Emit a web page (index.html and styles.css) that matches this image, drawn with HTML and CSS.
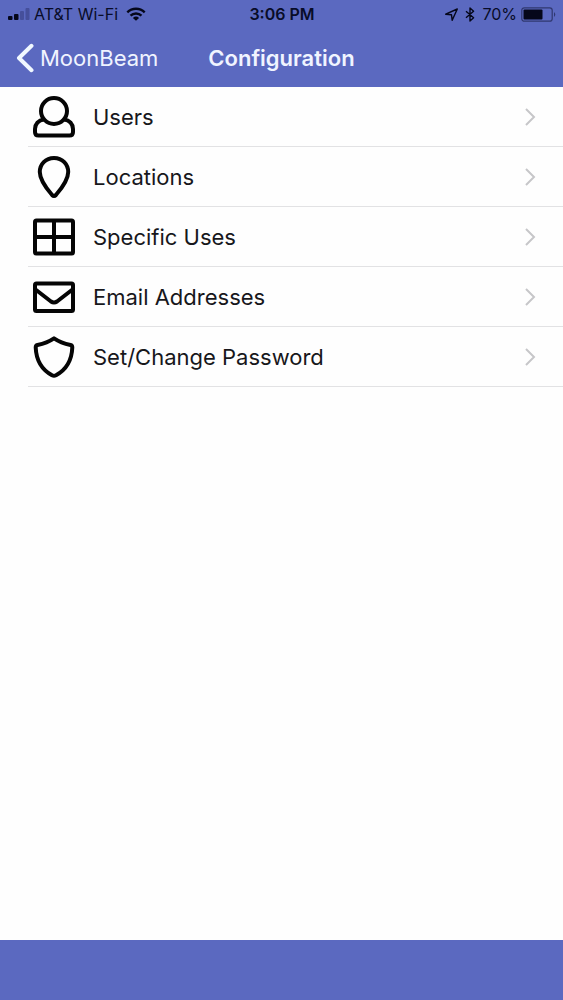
FILE: index.html
```html
<!DOCTYPE html>
<html lang="en">
<head>
<meta charset="utf-8">
<meta name="viewport" content="width=device-width, initial-scale=1">
<title>Configuration</title>
<link rel="stylesheet" href="styles.css">
</head>
<body>
<header class="header">
  <div class="status">
    <div class="status-left">
      <svg class="signal" width="22" height="12" viewBox="0 0 22 12" aria-hidden="true"><rect x="0" y="8" width="4.500" height="4" rx="1"/><rect x="6" y="6" width="4.500" height="6" rx="1"/><rect class="faint" x="12" y="3" width="4" height="9" rx="1"/><rect class="faint" x="17.500" y="0" width="4" height="12" rx="1"/></svg>
      <span class="carrier">AT&amp;T Wi-Fi</span>
      <svg class="wifi" width="20" height="14" viewBox="0 0 20 14" aria-hidden="true"><path d="M1.3 5.3a12.5 12.5 0 0 1 17.4 0M4.5 8.7a8 8 0 0 1 11 0"/><path class="dot" d="M6.9 10.9a4.6 4.6 0 0 1 6.2 0L10 13.8z"/></svg>
    </div>
    <span class="time">3:06 PM</span>
    <div class="status-right">
      <svg class="locate" width="13" height="13" viewBox="0 0 13 13" aria-hidden="true"><path d="M12.300 1 7.200 12.300 6.500 6.800 .7 6.200z"/></svg>
      <svg class="bluetooth" width="10" height="15" viewBox="0 0 10 15" aria-hidden="true"><path d="M1 4.2 8.6 10.8 5 14V1l3.6 3.2L1 10.8"/></svg>
      <span class="percent">70%</span>
      <svg class="battery" width="35" height="15" viewBox="0 0 35 15" aria-hidden="true"><rect class="case" x=".8" y=".8" width="30.4" height="13.4" rx="2.5"/><rect x="2.5" y="2.5" width="19" height="10" rx="1"/><path class="tip" d="M33 5q2.500 2.500 0 5z"/></svg>
    </div>
  </div>
  <nav class="navbar">
    <a class="back" href="#">
      <svg width="18" height="30" viewBox="0 0 18 30" aria-hidden="true"><path d="M15.5 2.8 3 15l12.5 12.2"/></svg>
      <span>MoonBeam</span>
    </a>
    <h1 class="title">Configuration</h1>
  </nav>
</header>
<main class="content">
  <ul class="menu">
    <li><a class="item" href="#">
      <svg class="icon" viewBox="0 0 42 42" aria-hidden="true"><circle cx="21" cy="15" r="13"/><path d="M10.8 23.5C5.500 24 2 28 2 33v3q0 3.500 3.500 3.500h31Q40 39.500 40 36v-3c0-5-3.500-9-8.800-9.500"/></svg>
      <span class="label">Users</span><svg class="chevron" viewBox="0 0 12 20" aria-hidden="true"><path d="m2 2 8 8-8 8"/></svg></a></li>
    <li><a class="item" href="#">
      <svg class="icon" viewBox="0 0 42 42" aria-hidden="true"><path d="M21 2C12.500 2 6.800 8.500 6.800 16c0 8 7.500 17.500 12.300 23q1.900 2 3.800 0c4.800-5.500 12.300-15 12.300-23C35.200 8.500 29.500 2 21 2z"/></svg>
      <span class="label">Locations</span><svg class="chevron" viewBox="0 0 12 20" aria-hidden="true"><path d="m2 2 8 8-8 8"/></svg></a></li>
    <li><a class="item" href="#">
      <svg class="icon" viewBox="0 0 42 42" aria-hidden="true"><rect x="2" y="4.500" width="38" height="33" rx="1.500"/><path d="M21 4.500v33M2 21h38"/></svg>
      <span class="label">Specific Uses</span><svg class="chevron" viewBox="0 0 12 20" aria-hidden="true"><path d="m2 2 8 8-8 8"/></svg></a></li>
    <li><a class="item" href="#">
      <svg class="icon" viewBox="0 0 42 42" aria-hidden="true"><rect x="2" y="7.500" width="38" height="27.500" rx="1.500"/><path d="m2.500 13.500 15.500 12q3 2 6 0l15.500-12"/></svg>
      <span class="label">Email Addresses</span><svg class="chevron" viewBox="0 0 12 20" aria-hidden="true"><path d="m2 2 8 8-8 8"/></svg></a></li>
    <li><a class="item" href="#">
      <svg class="icon" viewBox="0 0 42 42" aria-hidden="true"><path d="M21 2.300C15.500 6 10.500 7.700 4.500 9q-1.800.5-1.800 2.500C3.200 24 8.500 33.500 19 39.300q2 1 4 0C33.500 33.500 38.800 24 39.300 11.500q0-2-1.800-2.500C31.500 7.700 26.500 6 21 2.300z"/></svg>
      <span class="label">Set/Change Password</span><svg class="chevron" viewBox="0 0 12 20" aria-hidden="true"><path d="m2 2 8 8-8 8"/></svg></a></li>
  </ul>
</main>
<footer class="toolbar"></footer>
</body>
</html>
```
FILE: styles.css
```css
* { box-sizing: border-box; }
body {
  margin: 0;
  min-height: 100vh;
  display: flex;
  flex-direction: column;
  background: #fefefe;
  color: #17171b;
  font-family: Inter, "Liberation Sans", sans-serif;
}
a { color: inherit; text-decoration: none; }
svg { display: block; flex: none; }
.header { background: #5b69c0; }
.status {
  display: grid;
  grid-template-columns: 1fr auto 1fr;
  align-items: center;
  height: 28px;
  padding: 0 7px 0 8px;
  color: #080c28;
  font-size: 16px;
  line-height: 20px;
}
.status-left, .status-right { display: flex; align-items: center; }
.status-left { gap: 4px; }
.status-right { justify-content: flex-end; gap: 7px; }
.time { font-weight: 600; }
.status svg { fill: #05071a; }
.status .signal .faint { fill: #454f9b; }
.wifi { margin-left: 4px; }
.status .wifi path { fill: none; stroke: #05071a; stroke-width: 2.4; }
.status .wifi .dot { fill: #05071a; stroke: none; }
.status .locate, .status .bluetooth { fill: none; stroke: #05071a; stroke-width: 1.4; stroke-linejoin: round; }
.battery { margin-left: -3px; }
.status .battery .case { fill: none; stroke: #30386f; stroke-width: 1.2; }
.status .battery .tip { fill: #30386f; }
.navbar {
  display: grid;
  grid-template-columns: 1fr auto 1fr;
  align-items: center;
  height: 59px;
  padding: 0 16px;
  color: #f0f4ff;
  font-size: 22px;
  line-height: 28px;
}
.back { display: flex; align-items: center; gap: 6px; }
.back svg { fill: none; stroke: #f0f8ff; stroke-width: 4; stroke-linecap: round; stroke-linejoin: round; }
.title { margin: 0; font-size: 22px; font-weight: 600; }
.content { flex: 1; }
.menu { margin: 0; padding: 0 0 0 28px; list-style: none; }
.item {
  display: flex;
  align-items: center;
  height: 60px;
  padding: 0 27px 0 5px;
  border-bottom: 1px solid #e2e2e4;
}
.icon {
  width: 42px;
  height: 42px;
  fill: none;
  stroke: #050505;
  stroke-width: 4;
  stroke-linejoin: round;
}
.label { flex: 1; margin-left: 18px; font-size: 22px; line-height: 28px; }
.chevron { width: 12px; height: 20px; fill: none; stroke: #c6c6c9; stroke-width: 2; }
.toolbar { height: 60px; background: #5b69c0; }
```
